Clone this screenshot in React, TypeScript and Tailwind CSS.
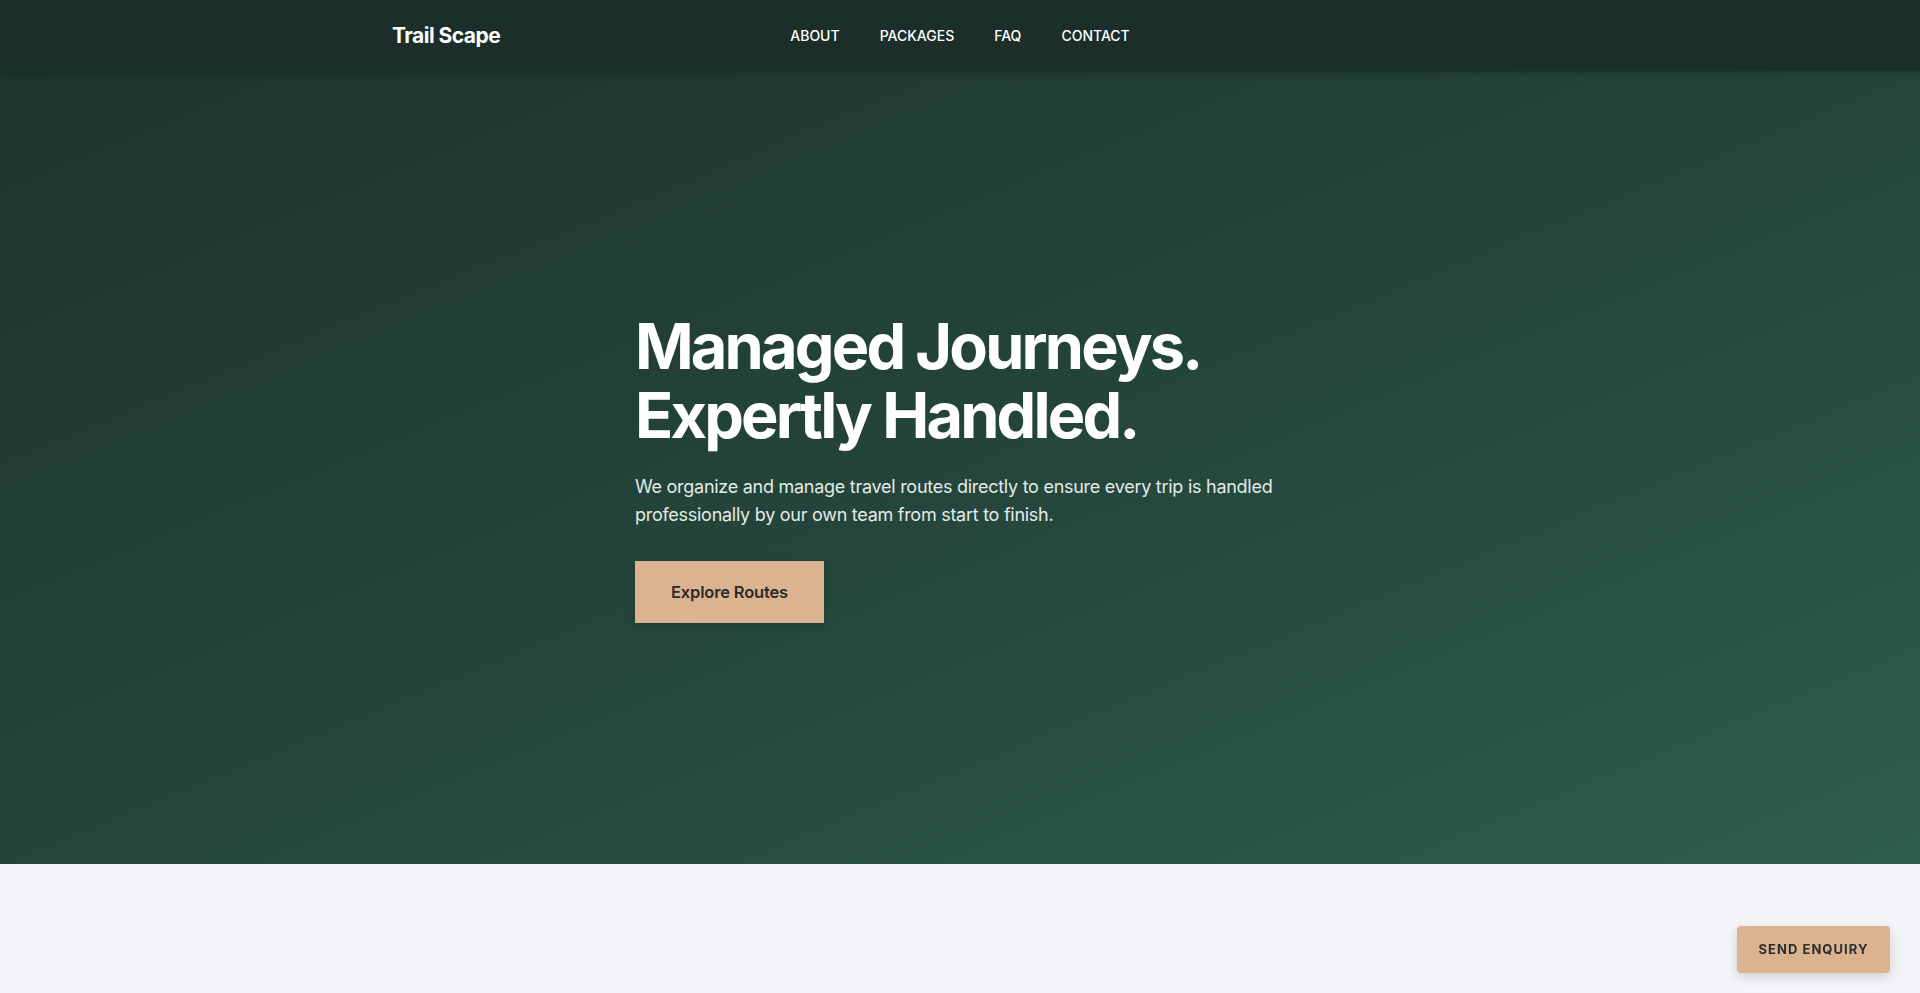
const NAV_LINKS = ["About", "Packages", "FAQ", "Contact"];

function Navbar() {
  return (
    <header className="relative z-20 h-[71px] bg-[#1b2e29] shadow-[0_2px_6px_rgba(0,0,0,0.25)]">
      <div className="mx-auto grid h-full max-w-6xl grid-cols-3 items-center px-2">
        <a
          href="#"
          className="text-[21px] font-bold tracking-tight text-white"
        >
          Trail Scape
        </a>
        <nav className="flex items-center justify-center gap-10">
          {NAV_LINKS.map((link) => (
            <a
              key={link}
              href="#"
              className="whitespace-nowrap text-[14px] font-medium uppercase text-white"
            >
              {link}
            </a>
          ))}
        </nav>
        <div />
      </div>
    </header>
  );
}

function Hero() {
  return (
    <section className="flex h-[793px] items-center bg-linear-to-br from-[#1c342e] via-[#24453b] to-[#2f5d4f]">
      <div className="mx-auto w-[650px]">
        <h1 className="text-[63px] font-bold leading-[1.09] tracking-[-0.045em] text-white">
          Managed Journeys.
          <br />
          Expertly Handled.
        </h1>
        <p className="mt-6 text-[18px] leading-[28px] tracking-[-0.015em] text-[#e3ebe7]">
          We organize and manage travel routes directly to ensure every trip is
          handled professionally by our own team from start to finish.
        </p>
        <button className="mt-8 h-[62px] bg-[#dbb391] px-9 text-[16.5px] font-semibold tracking-[-0.01em] text-[#2b2b28] shadow-[0_2px_6px_rgba(0,0,0,0.2)]">
          Explore Routes
        </button>
      </div>
    </section>
  );
}

export default function App() {
  return (
    <div className="min-h-screen bg-[#f4f4f8] font-['Inter',sans-serif]">
      <Navbar />
      <Hero />
      <section className="h-[200px] bg-[#f4f4f8]" />
      <button className="fixed bottom-5 right-[30px] z-30 h-[47px] w-[153px] rounded bg-[#dbb391] text-[13px] font-bold uppercase tracking-[0.08em] text-[#2a2f2b] shadow-[0_4px_12px_rgba(0,0,0,0.15)]">
        Send Enquiry
      </button>
    </div>
  );
}
